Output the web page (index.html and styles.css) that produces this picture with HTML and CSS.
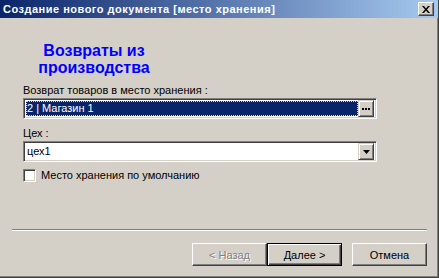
FILE: index.html
```html
<!DOCTYPE html>
<html lang="ru">
<head>
    <meta charset="UTF-8">
    <title>Создание нового документа [место хранения]</title>
    <link rel="stylesheet" href="styles.css">
</head>
<body>
    <div class="window">
        <div class="titlebar">
            <span class="title">Создание нового документа [место хранения]</span>
            <button class="close-btn" title="Закрыть">
                <svg width="8" height="7" viewBox="0 0 8 7">
                    <path d="M0 0h2l2 2.5L6 0h2L5 3.5 8 7H6L4 4.5 2 7H0l3-3.5z" fill="#000"/>
                </svg>
            </button>
        </div>

        <div class="content">
            <h1 class="heading">Возвраты из производства</h1>

            <label class="field-label">Возврат товаров в место хранения :</label>
            <div class="field selected">
                <span class="field-text">2 | Магазин 1</span>
                <span class="field-btn">
                    <svg width="8" height="2" viewBox="0 0 8 2">
                        <rect x="0" y="0" width="2" height="2" fill="#000"/>
                        <rect x="3" y="0" width="2" height="2" fill="#000"/>
                        <rect x="6" y="0" width="2" height="2" fill="#000"/>
                    </svg>
                </span>
            </div>

            <label class="field-label second">Цех :</label>
            <div class="field">
                <span class="field-text">цех1</span>
                <span class="field-btn">
                    <svg width="7" height="4" viewBox="0 0 7 4">
                        <path d="M0 0h7L3.5 4z" fill="#000"/>
                    </svg>
                </span>
            </div>

            <div class="check-row">
                <span class="checkbox"></span>
                <span>Место хранения по умолчанию</span>
            </div>
        </div>

        <div class="footer">
            <div class="separator"></div>
            <div class="buttons">
                <button class="btn" disabled>&lt; Назад</button>
                <button class="btn default">Далее &gt;</button>
                <button class="btn cancel">Отмена</button>
            </div>
        </div>
    </div>
</body>
</html>
```

FILE: styles.css
```css
html, body {
    margin: 0;
    padding: 0;
}
body {
    width: 439px;
    height: 278px;
    overflow: hidden;
    background-color: #d4d0c8;
    font-family: 'Liberation Sans', Arial, sans-serif;
    font-size: 11px;
    color: #000;
}
.window {
    box-sizing: border-box;
    width: 439px;
    height: 278px;
    display: flex;
    flex-direction: column;
    background-color: #d4d0c8;
    border-right: 1px solid #404040;
    border-bottom: 1px solid #404040;
    box-shadow: inset -1px -1px #808080;
}
.titlebar {
    height: 18px;
    display: flex;
    align-items: center;
    justify-content: space-between;
    padding: 0 4px 0 3px;
    background: linear-gradient(to right, #0a246a, #a6caf0);
}
.title {
    color: #fff;
    font-weight: bold;
    font-size: 11px;
    letter-spacing: 0.5px;
    white-space: nowrap;
}
.close-btn {
    box-sizing: border-box;
    width: 16px;
    height: 14px;
    padding: 0;
    display: flex;
    align-items: center;
    justify-content: center;
    background-color: #d4d0c8;
    border: 1px solid;
    border-color: #fff #404040 #404040 #fff;
    box-shadow: inset -1px -1px #808080;
}
.content {
    padding: 0 61px 0 23px;
    display: flex;
    flex-direction: column;
    align-items: flex-start;
}
.heading {
    width: 142px;
    margin: 24px 0 0 0;
    text-align: center;
    font-size: 16px;
    line-height: 17px;
    font-weight: bold;
    color: #0000ff;
}
.field-label {
    display: block;
    margin-top: 8px;
    line-height: 13px;
}
.field-label.second {
    margin-top: 8px;
}
.field {
    box-sizing: border-box;
    align-self: stretch;
    height: 21px;
    margin-top: 1px;
    display: flex;
    align-items: center;
    background-color: #fff;
    border: 1px solid;
    border-color: #808080 #fff #fff #808080;
    box-shadow: inset 1px 1px #404040, inset -1px -1px #d4d0c8;
    padding: 2px;
}
.field-text {
    flex: 1;
    height: 15px;
    line-height: 15px;
    padding-left: 1px;
    white-space: nowrap;
}
.field.selected .field-text {
    background-color: #0a246a;
    color: #fff;
    outline: 1px dotted #e8d890;
    outline-offset: -1px;
}
.field-btn {
    box-sizing: border-box;
    width: 16px;
    height: 17px;
    display: flex;
    align-items: center;
    justify-content: center;
    background-color: #d4d0c8;
    border: 1px solid;
    border-color: #d4d0c8 #404040 #404040 #d4d0c8;
    box-shadow: inset 1px 1px #fff, inset -1px -1px #808080;
}
.check-row {
    margin-top: 7px;
    display: flex;
    align-items: center;
    gap: 5px;
    line-height: 13px;
}
.checkbox {
    box-sizing: border-box;
    width: 13px;
    height: 13px;
    background-color: #fff;
    border: 1px solid;
    border-color: #808080 #fff #fff #808080;
    box-shadow: inset 1px 1px #404040, inset -1px -1px #d4d0c8;
}
.footer {
    margin-top: auto;
    padding: 0 11px 11px 12px;
}
.separator {
    height: 0;
    border-top: 1px solid #808080;
    border-bottom: 1px solid #fff;
}
.buttons {
    margin-top: 12px;
    display: flex;
    justify-content: flex-end;
}
.btn {
    box-sizing: border-box;
    width: 75px;
    height: 23px;
    padding: 0;
    font-family: 'Liberation Sans', Arial, sans-serif;
    font-size: 11px;
    color: #000;
    background-color: #d4d0c8;
    border: 1px solid;
    border-color: #fff #404040 #404040 #fff;
    box-shadow: inset -1px -1px #808080;
}
.btn:disabled {
    color: #808080;
    text-shadow: 1px 1px #fff;
}
.btn.default {
    border: 1px solid #000;
    box-shadow: inset 1px 1px #fff, inset -1px -1px #404040, inset -2px -2px #808080;
}
.btn.cancel {
    margin-left: 10px;
}
```
